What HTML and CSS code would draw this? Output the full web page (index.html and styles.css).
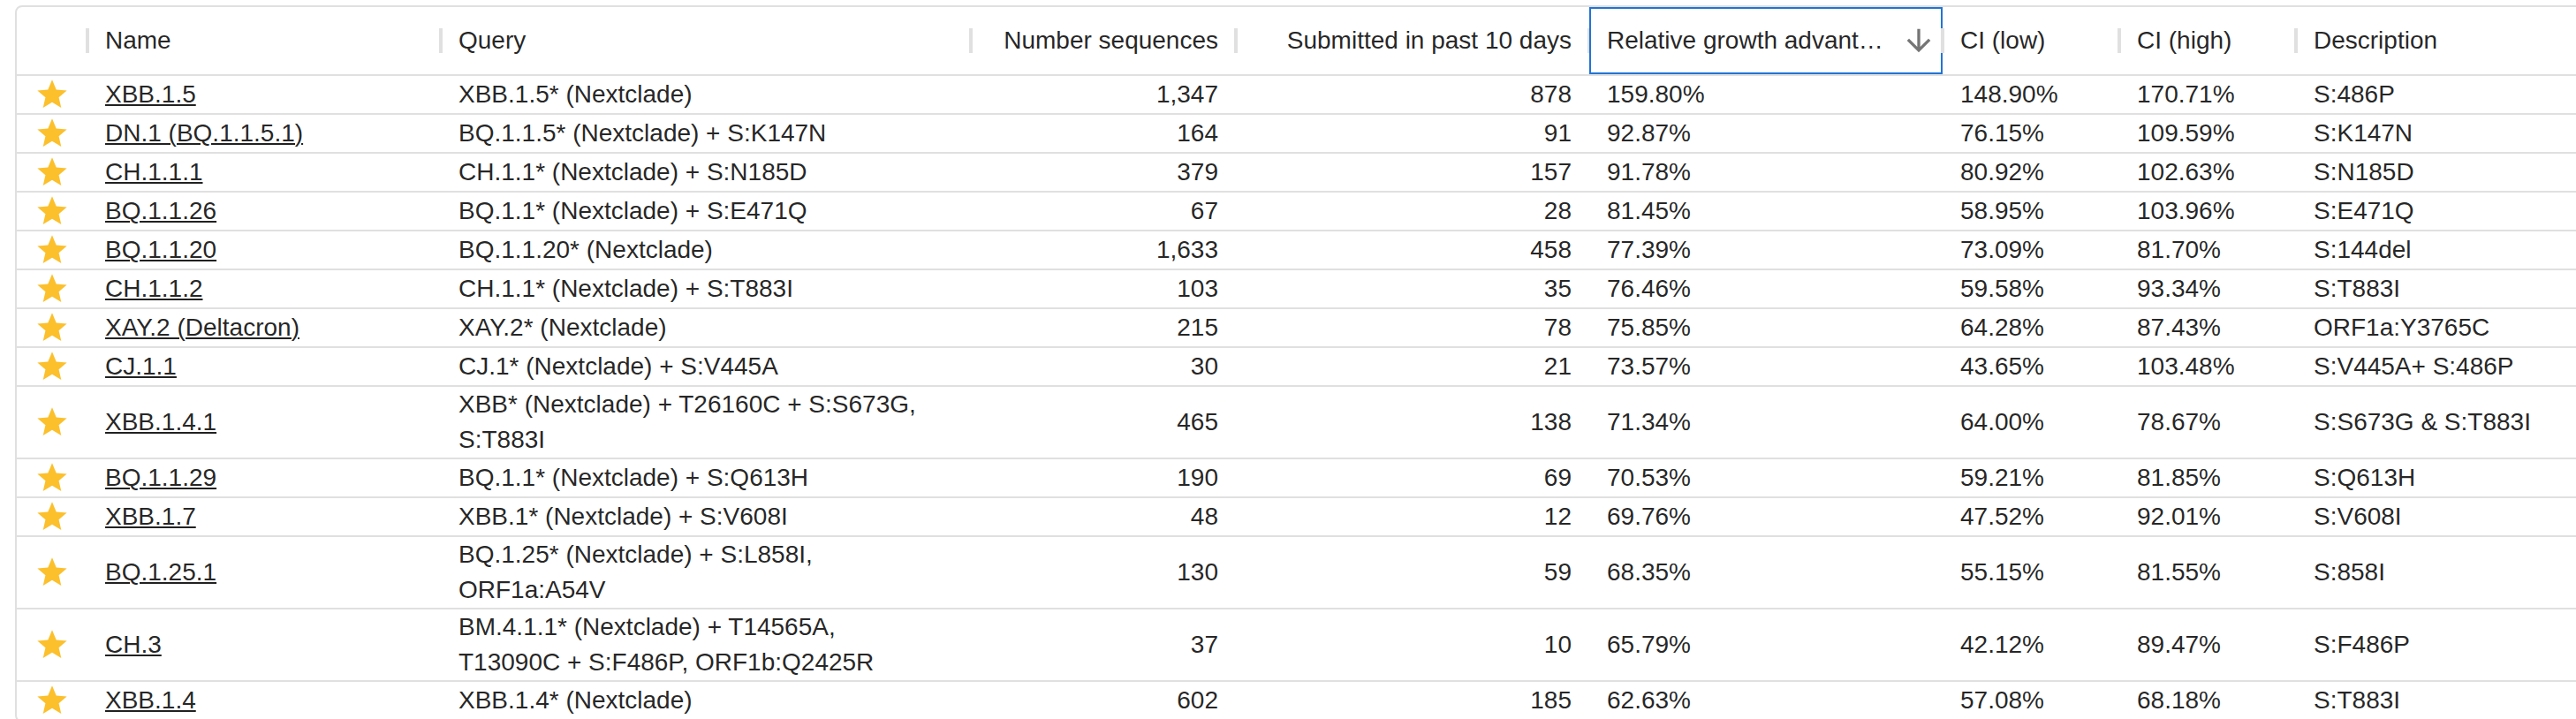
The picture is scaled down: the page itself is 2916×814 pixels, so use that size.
FILE: index.html
```html
<!DOCTYPE html>
<html lang="en">
<head>
<meta charset="utf-8">
<title>Variants</title>
<link rel="stylesheet" href="styles.css">
</head>
<body>
<div class="page">
  <div class="grid" role="grid">
    <div class="row head" role="row">
      <div class="cell hcell"></div>
      <div class="cell hcell">Name</div>
      <div class="cell hcell">Query</div>
      <div class="cell hcell num">Number sequences</div>
      <div class="cell hcell num">Submitted in past 10 days</div>
      <div class="cell hcell sorted">
        <span class="title">Relative growth advantage</span>
        <span class="sort-btn"><svg viewBox="0 0 24 24" width="40" height="40"><path d="M20 12l-1.41-1.41L13 16.17V4h-2v12.17l-5.58-5.59L4 12l8 8 8-8z"/></svg></span>
      </div>
      <div class="cell hcell">CI (low)</div>
      <div class="cell hcell">CI (high)</div>
      <div class="cell hcell">Description</div>
    </div>

    <div class="row" role="row">
      <div class="cell star"><svg viewBox="0 0 24 24" width="40" height="40"><path d="M12 17.27 18.18 21l-1.64-7.03L22 9.24l-7.19-.61L12 2 9.19 8.63 2 9.24l5.46 4.73L5.82 21z"/></svg></div>
      <div class="cell"><a href="#">XBB.1.5</a></div>
      <div class="cell query">XBB.1.5* (Nextclade)</div>
      <div class="cell num">1,347</div>
      <div class="cell num">878</div>
      <div class="cell">159.80%</div>
      <div class="cell">148.90%</div>
      <div class="cell">170.71%</div>
      <div class="cell">S:486P</div>
    </div>
    <div class="row" role="row">
      <div class="cell star"><svg viewBox="0 0 24 24" width="40" height="40"><path d="M12 17.27 18.18 21l-1.64-7.03L22 9.24l-7.19-.61L12 2 9.19 8.63 2 9.24l5.46 4.73L5.82 21z"/></svg></div>
      <div class="cell"><a href="#">DN.1 (BQ.1.1.5.1)</a></div>
      <div class="cell query">BQ.1.1.5* (Nextclade) + S:K147N</div>
      <div class="cell num">164</div>
      <div class="cell num">91</div>
      <div class="cell">92.87%</div>
      <div class="cell">76.15%</div>
      <div class="cell">109.59%</div>
      <div class="cell">S:K147N</div>
    </div>
    <div class="row" role="row">
      <div class="cell star"><svg viewBox="0 0 24 24" width="40" height="40"><path d="M12 17.27 18.18 21l-1.64-7.03L22 9.24l-7.19-.61L12 2 9.19 8.63 2 9.24l5.46 4.73L5.82 21z"/></svg></div>
      <div class="cell"><a href="#">CH.1.1.1</a></div>
      <div class="cell query">CH.1.1* (Nextclade) + S:N185D</div>
      <div class="cell num">379</div>
      <div class="cell num">157</div>
      <div class="cell">91.78%</div>
      <div class="cell">80.92%</div>
      <div class="cell">102.63%</div>
      <div class="cell">S:N185D</div>
    </div>
    <div class="row" role="row">
      <div class="cell star"><svg viewBox="0 0 24 24" width="40" height="40"><path d="M12 17.27 18.18 21l-1.64-7.03L22 9.24l-7.19-.61L12 2 9.19 8.63 2 9.24l5.46 4.73L5.82 21z"/></svg></div>
      <div class="cell"><a href="#">BQ.1.1.26</a></div>
      <div class="cell query">BQ.1.1* (Nextclade) + S:E471Q</div>
      <div class="cell num">67</div>
      <div class="cell num">28</div>
      <div class="cell">81.45%</div>
      <div class="cell">58.95%</div>
      <div class="cell">103.96%</div>
      <div class="cell">S:E471Q</div>
    </div>
    <div class="row" role="row">
      <div class="cell star"><svg viewBox="0 0 24 24" width="40" height="40"><path d="M12 17.27 18.18 21l-1.64-7.03L22 9.24l-7.19-.61L12 2 9.19 8.63 2 9.24l5.46 4.73L5.82 21z"/></svg></div>
      <div class="cell"><a href="#">BQ.1.1.20</a></div>
      <div class="cell query">BQ.1.1.20* (Nextclade)</div>
      <div class="cell num">1,633</div>
      <div class="cell num">458</div>
      <div class="cell">77.39%</div>
      <div class="cell">73.09%</div>
      <div class="cell">81.70%</div>
      <div class="cell">S:144del</div>
    </div>
    <div class="row" role="row">
      <div class="cell star"><svg viewBox="0 0 24 24" width="40" height="40"><path d="M12 17.27 18.18 21l-1.64-7.03L22 9.24l-7.19-.61L12 2 9.19 8.63 2 9.24l5.46 4.73L5.82 21z"/></svg></div>
      <div class="cell"><a href="#">CH.1.1.2</a></div>
      <div class="cell query">CH.1.1* (Nextclade) + S:T883I</div>
      <div class="cell num">103</div>
      <div class="cell num">35</div>
      <div class="cell">76.46%</div>
      <div class="cell">59.58%</div>
      <div class="cell">93.34%</div>
      <div class="cell">S:T883I</div>
    </div>
    <div class="row" role="row">
      <div class="cell star"><svg viewBox="0 0 24 24" width="40" height="40"><path d="M12 17.27 18.18 21l-1.64-7.03L22 9.24l-7.19-.61L12 2 9.19 8.63 2 9.24l5.46 4.73L5.82 21z"/></svg></div>
      <div class="cell"><a href="#">XAY.2 (Deltacron)</a></div>
      <div class="cell query">XAY.2* (Nextclade)</div>
      <div class="cell num">215</div>
      <div class="cell num">78</div>
      <div class="cell">75.85%</div>
      <div class="cell">64.28%</div>
      <div class="cell">87.43%</div>
      <div class="cell">ORF1a:Y3765C</div>
    </div>
    <div class="row" role="row">
      <div class="cell star"><svg viewBox="0 0 24 24" width="40" height="40"><path d="M12 17.27 18.18 21l-1.64-7.03L22 9.24l-7.19-.61L12 2 9.19 8.63 2 9.24l5.46 4.73L5.82 21z"/></svg></div>
      <div class="cell"><a href="#">CJ.1.1</a></div>
      <div class="cell query">CJ.1* (Nextclade) + S:V445A</div>
      <div class="cell num">30</div>
      <div class="cell num">21</div>
      <div class="cell">73.57%</div>
      <div class="cell">43.65%</div>
      <div class="cell">103.48%</div>
      <div class="cell">S:V445A+ S:486P</div>
    </div>
    <div class="row" role="row">
      <div class="cell star"><svg viewBox="0 0 24 24" width="40" height="40"><path d="M12 17.27 18.18 21l-1.64-7.03L22 9.24l-7.19-.61L12 2 9.19 8.63 2 9.24l5.46 4.73L5.82 21z"/></svg></div>
      <div class="cell"><a href="#">XBB.1.4.1</a></div>
      <div class="cell query">XBB* (Nextclade) + T26160C + S:S673G, S:T883I</div>
      <div class="cell num">465</div>
      <div class="cell num">138</div>
      <div class="cell">71.34%</div>
      <div class="cell">64.00%</div>
      <div class="cell">78.67%</div>
      <div class="cell">S:S673G &amp; S:T883I</div>
    </div>
    <div class="row" role="row">
      <div class="cell star"><svg viewBox="0 0 24 24" width="40" height="40"><path d="M12 17.27 18.18 21l-1.64-7.03L22 9.24l-7.19-.61L12 2 9.19 8.63 2 9.24l5.46 4.73L5.82 21z"/></svg></div>
      <div class="cell"><a href="#">BQ.1.1.29</a></div>
      <div class="cell query">BQ.1.1* (Nextclade) + S:Q613H</div>
      <div class="cell num">190</div>
      <div class="cell num">69</div>
      <div class="cell">70.53%</div>
      <div class="cell">59.21%</div>
      <div class="cell">81.85%</div>
      <div class="cell">S:Q613H</div>
    </div>
    <div class="row" role="row">
      <div class="cell star"><svg viewBox="0 0 24 24" width="40" height="40"><path d="M12 17.27 18.18 21l-1.64-7.03L22 9.24l-7.19-.61L12 2 9.19 8.63 2 9.24l5.46 4.73L5.82 21z"/></svg></div>
      <div class="cell"><a href="#">XBB.1.7</a></div>
      <div class="cell query">XBB.1* (Nextclade) + S:V608I</div>
      <div class="cell num">48</div>
      <div class="cell num">12</div>
      <div class="cell">69.76%</div>
      <div class="cell">47.52%</div>
      <div class="cell">92.01%</div>
      <div class="cell">S:V608I</div>
    </div>
    <div class="row" role="row">
      <div class="cell star"><svg viewBox="0 0 24 24" width="40" height="40"><path d="M12 17.27 18.18 21l-1.64-7.03L22 9.24l-7.19-.61L12 2 9.19 8.63 2 9.24l5.46 4.73L5.82 21z"/></svg></div>
      <div class="cell"><a href="#">BQ.1.25.1</a></div>
      <div class="cell query">BQ.1.25* (Nextclade) + S:L858I, ORF1a:A54V</div>
      <div class="cell num">130</div>
      <div class="cell num">59</div>
      <div class="cell">68.35%</div>
      <div class="cell">55.15%</div>
      <div class="cell">81.55%</div>
      <div class="cell">S:858I</div>
    </div>
    <div class="row" role="row">
      <div class="cell star"><svg viewBox="0 0 24 24" width="40" height="40"><path d="M12 17.27 18.18 21l-1.64-7.03L22 9.24l-7.19-.61L12 2 9.19 8.63 2 9.24l5.46 4.73L5.82 21z"/></svg></div>
      <div class="cell"><a href="#">CH.3</a></div>
      <div class="cell query">BM.4.1.1* (Nextclade) + T14565A, T13090C + S:F486P, ORF1b:Q2425R</div>
      <div class="cell num">37</div>
      <div class="cell num">10</div>
      <div class="cell">65.79%</div>
      <div class="cell">42.12%</div>
      <div class="cell">89.47%</div>
      <div class="cell">S:F486P</div>
    </div>
    <div class="row" role="row">
      <div class="cell star"><svg viewBox="0 0 24 24" width="40" height="40"><path d="M12 17.27 18.18 21l-1.64-7.03L22 9.24l-7.19-.61L12 2 9.19 8.63 2 9.24l5.46 4.73L5.82 21z"/></svg></div>
      <div class="cell"><a href="#">XBB.1.4</a></div>
      <div class="cell query">XBB.1.4* (Nextclade)</div>
      <div class="cell num">602</div>
      <div class="cell num">185</div>
      <div class="cell">62.63%</div>
      <div class="cell">57.08%</div>
      <div class="cell">68.18%</div>
      <div class="cell">S:T883I</div>
    </div>
  </div>
</div>
</body>
</html>
```
FILE: styles.css
```css
:root {
  --line: #e0e0e0;
  --text: rgba(0, 0, 0, 0.87);
}

html, body {
  margin: 0;
  padding: 0;
  background: #ffffff;
  overflow: hidden;
}

body {
  font-family: "Liberation Sans", Arial, Helvetica, sans-serif;
  font-size: 28px;
  color: var(--text);
}

.page {
  padding: 6px 0 0 17px;
}

.grid {
  width: 2990px;
  border: 2px solid var(--line);
  border-radius: 8px;
}

.row {
  display: grid;
  grid-template-columns: 80px 400px 600px 300px 400px 400px 200px 200px 400px;
  min-height: 42px;
  border-bottom: 2px solid var(--line);
}

.cell {
  display: flex;
  align-items: center;
  min-width: 0;
  padding: 0 20px;
  line-height: 40px;
}

.cell.query {
  padding-right: 34px;
}

.cell.num {
  justify-content: flex-end;
  text-align: right;
}

.cell a {
  color: inherit;
  text-decoration: underline;
  text-decoration-thickness: 2px;
  text-underline-offset: 2px;
}

.star {
  justify-content: center;
  padding: 0;
}

.star svg {
  display: block;
  fill: #fcc02c;
}

.head {
  height: 76px;
}

.hcell {
  position: relative;
  white-space: nowrap;
}

.hcell::after {
  content: "";
  position: absolute;
  right: -2px;
  top: 24px;
  width: 4px;
  height: 28px;
  background: var(--line);
}

.sorted {
  padding-right: 0;
  outline: 2px solid #2174d4;
  outline-offset: -2px;
}

.sorted .title {
  flex: 1;
  min-width: 0;
  overflow: hidden;
  text-overflow: ellipsis;
  white-space: nowrap;
}

.sort-btn {
  flex: none;
  width: 54px;
  display: flex;
  align-items: center;
  justify-content: center;
}

.sort-btn svg {
  display: block;
  fill: rgba(0, 0, 0, 0.54);
}
```
